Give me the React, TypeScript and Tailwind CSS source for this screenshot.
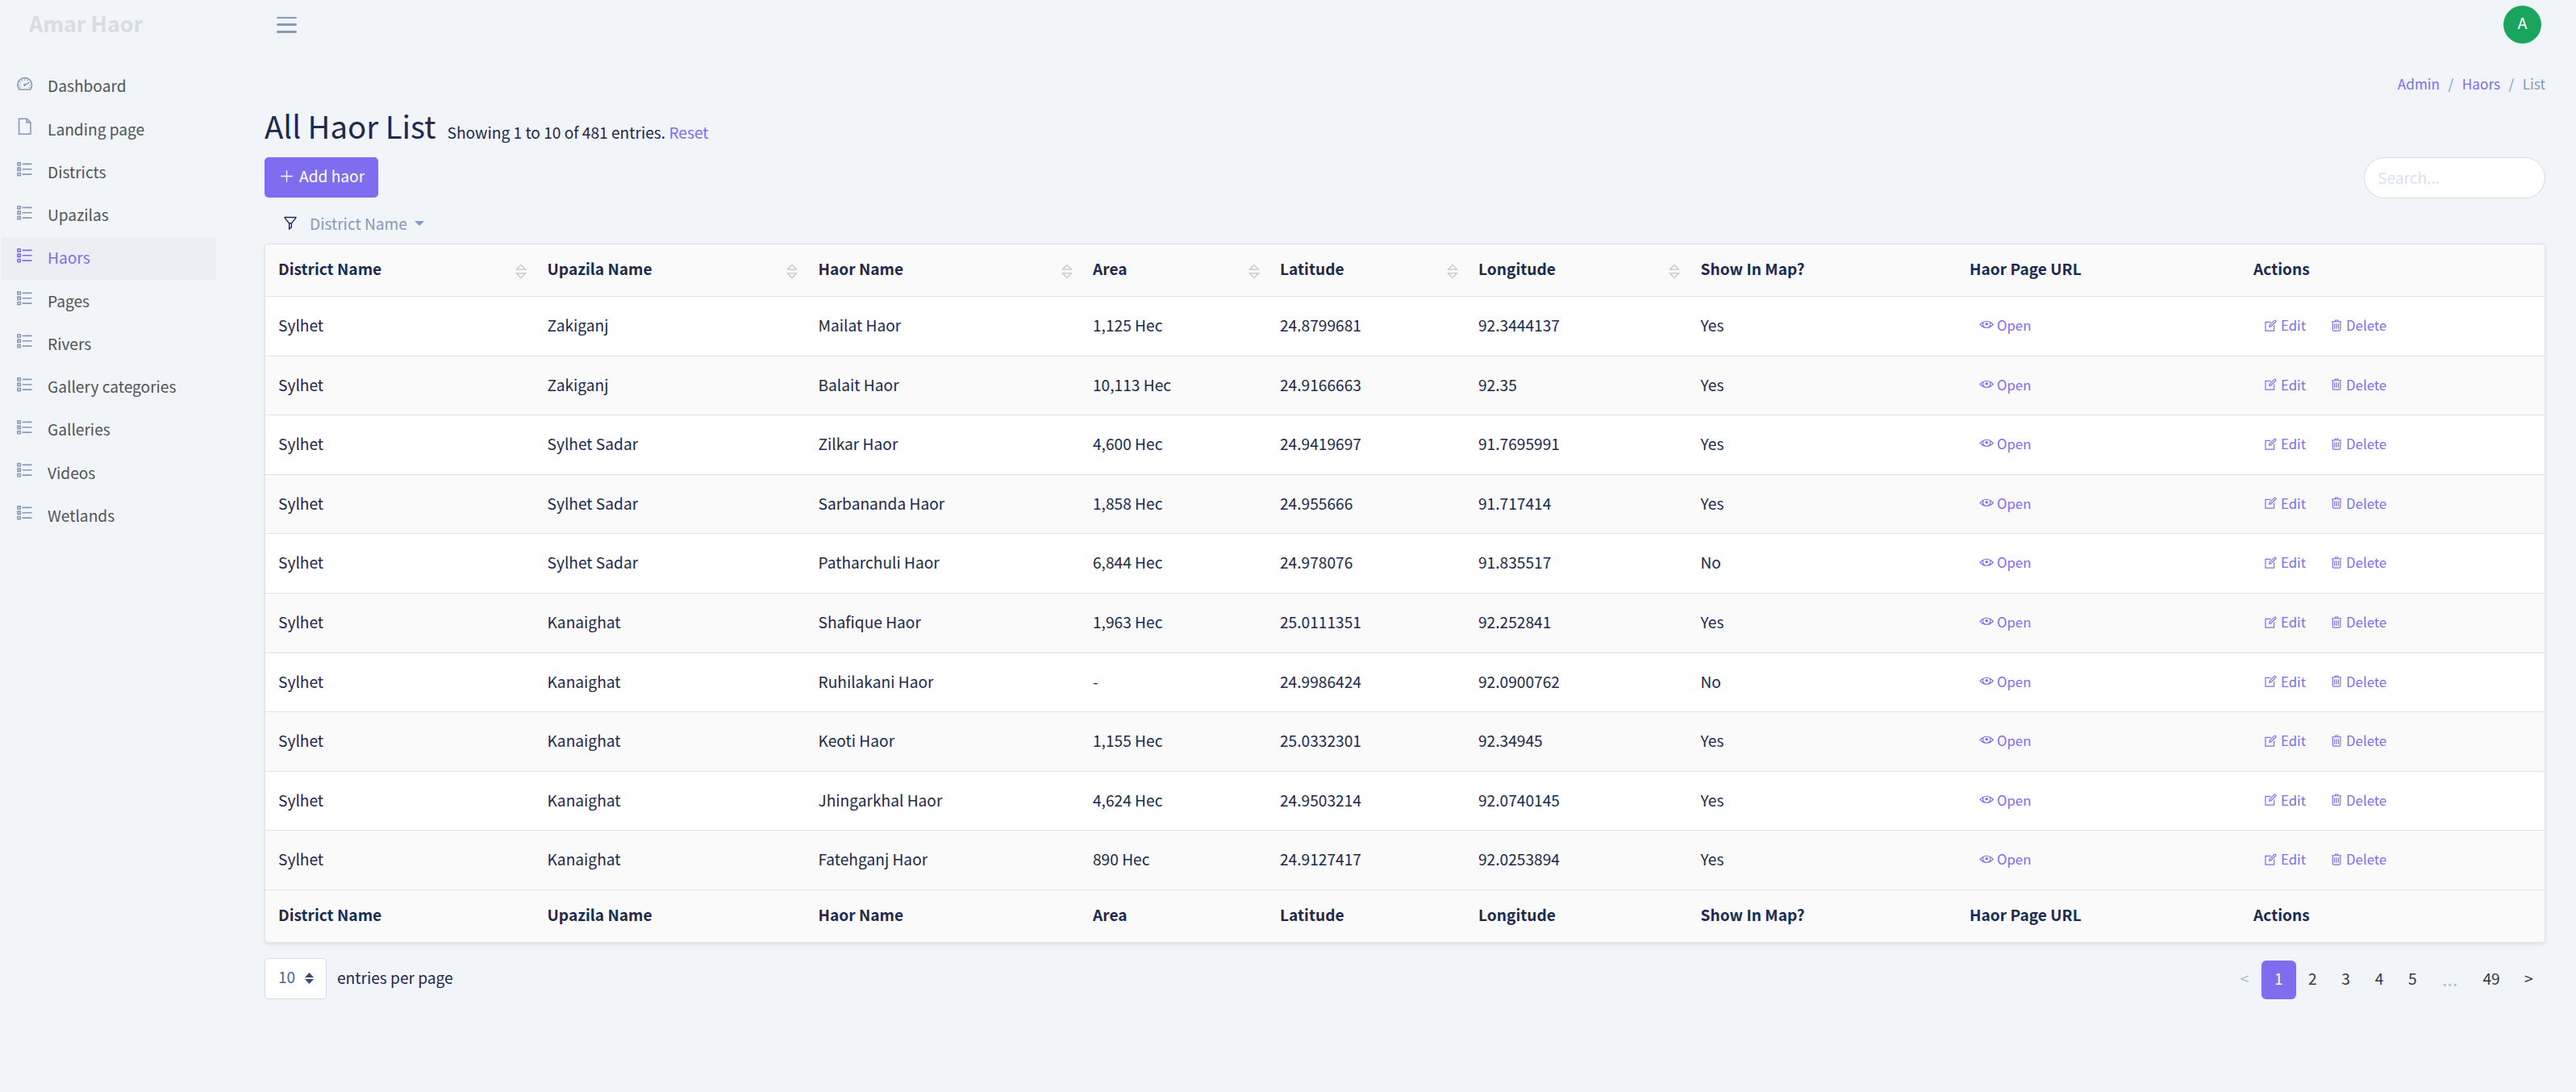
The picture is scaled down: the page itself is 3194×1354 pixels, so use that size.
import { useState } from 'react';
import {
  LiaEdit,
  LiaEye,
  LiaFile,
  LiaFilterSolid,
  LiaListSolid,
  LiaPlusSolid,
  LiaTachometerAltSolid,
  LiaTrashAlt,
} from 'react-icons/lia';
import { clsx } from 'clsx';

interface Haor {
  district: string;
  upazila: string;
  name: string;
  area: string;
  lat: string;
  lng: string;
  inMap: boolean;
}

const menu = [
  { label: 'Dashboard', icon: LiaTachometerAltSolid },
  { label: 'Landing page', icon: LiaFile },
  { label: 'Districts', icon: LiaListSolid },
  { label: 'Upazilas', icon: LiaListSolid },
  { label: 'Haors', icon: LiaListSolid },
  { label: 'Pages', icon: LiaListSolid },
  { label: 'Rivers', icon: LiaListSolid },
  { label: 'Gallery categories', icon: LiaListSolid },
  { label: 'Galleries', icon: LiaListSolid },
  { label: 'Videos', icon: LiaListSolid },
  { label: 'Wetlands', icon: LiaListSolid },
];

const columns = [
  { label: 'District Name', width: 'w-[333.5px]', sortable: true },
  { label: 'Upazila Name', width: 'w-[336px]', sortable: true },
  { label: 'Haor Name', width: 'w-[340.5px]', sortable: true },
  { label: 'Area', width: 'w-[232px]', sortable: true },
  { label: 'Latitude', width: 'w-[246px]', sortable: true },
  { label: 'Longitude', width: 'w-[275.5px]', sortable: true },
  { label: 'Show In Map?', width: 'w-[333.5px]', sortable: false },
  { label: 'Haor Page URL', width: 'w-[352px]', sortable: false },
  { label: 'Actions', width: '', sortable: false },
];

const haors: Haor[] = [
  { district: 'Sylhet', upazila: 'Zakiganj', name: 'Mailat Haor', area: '1,125 Hec', lat: '24.8799681', lng: '92.3444137', inMap: true },
  { district: 'Sylhet', upazila: 'Zakiganj', name: 'Balait Haor', area: '10,113 Hec', lat: '24.9166663', lng: '92.35', inMap: true },
  { district: 'Sylhet', upazila: 'Sylhet Sadar', name: 'Zilkar Haor', area: '4,600 Hec', lat: '24.9419697', lng: '91.7695991', inMap: true },
  { district: 'Sylhet', upazila: 'Sylhet Sadar', name: 'Sarbananda Haor', area: '1,858 Hec', lat: '24.955666', lng: '91.717414', inMap: true },
  { district: 'Sylhet', upazila: 'Sylhet Sadar', name: 'Patharchuli Haor', area: '6,844 Hec', lat: '24.978076', lng: '91.835517', inMap: false },
  { district: 'Sylhet', upazila: 'Kanaighat', name: 'Shafique Haor', area: '1,963 Hec', lat: '25.0111351', lng: '92.252841', inMap: true },
  { district: 'Sylhet', upazila: 'Kanaighat', name: 'Ruhilakani Haor', area: '-', lat: '24.9986424', lng: '92.0900762', inMap: false },
  { district: 'Sylhet', upazila: 'Kanaighat', name: 'Keoti Haor', area: '1,155 Hec', lat: '25.0332301', lng: '92.34945', inMap: true },
  { district: 'Sylhet', upazila: 'Kanaighat', name: 'Jhingarkhal Haor', area: '4,624 Hec', lat: '24.9503214', lng: '92.0740145', inMap: true },
  { district: 'Sylhet', upazila: 'Kanaighat', name: 'Fatehganj Haor', area: '890 Hec', lat: '24.9127417', lng: '92.0253894', inMap: true },
];

const pages = ['<', '1', '2', '3', '4', '5', '…', '49', '>'];

const SortIcon = () => (
  <svg className="h-[19px] w-[14px]" viewBox="0 0 14 19" fill="none" stroke="#c0c5d0" strokeWidth="1.3">
    <path d="M7 1.4 12.6 7.2H1.4Z" />
    <path d="M7 17.6 12.6 11.8H1.4Z" />
  </svg>
);

const Header = () => (
  <header className="flex h-[61px] items-center">
    <div className="w-[343px] pb-[4px] pl-9 text-[26.8px] leading-[40px] font-bold text-[#d9dde1]">Amar Haor</div>
    <button className="flex h-[20px] w-[25px] flex-col justify-between">
      <span className="h-[2.5px] w-full rounded-full bg-[#869ab8]" />
      <span className="h-[2.5px] w-full rounded-full bg-[#869ab8]" />
      <span className="h-[2.5px] w-full rounded-full bg-[#869ab8]" />
    </button>
    <div className="mr-[43px] ml-auto flex size-[47px] items-center justify-center rounded-full bg-[#1aa55c] pb-[5px] text-white">
      A
    </div>
  </header>
);

const Sidebar = () => (
  <nav className="w-[268px] shrink-0 pt-[20px] pl-px">
    {menu.map(({ label, icon: Icon }) => {
      const active = label === 'Haors';
      return (
        <a
          key={label}
          className={clsx(
            'flex h-[53.25px] items-center rounded pb-[2.5px] pl-[17px]',
            active ? 'bg-[#ebeef3] text-[#7e6dee]' : 'text-[#4f5459]',
          )}
        >
          <Icon className={clsx('mb-[5.5px] size-[25.5px]', !active && 'text-[#869ab8]')} />
          <span className="ml-[15.5px]">{label}</span>
        </a>
      );
    })}
  </nav>
);

const HaorTable = () => (
  <div className="overflow-hidden rounded border border-[#dfe3ea] bg-[#fafafa] shadow-[0_2px_4px_rgba(27,42,78,0.1)]">
    <table className="w-full table-fixed border-separate border-spacing-0 text-left">
      <thead>
        <tr className="h-[64px]">
          {columns.map(({ label, width, sortable }) => (
            <th key={label} className={clsx('p-0 pb-[4px] pl-4 align-middle font-bold', width)}>
              <div className="flex items-center justify-between pr-[9.5px]">
                {label}
                {sortable && <span className="mt-[6px]"><SortIcon /></span>}
              </div>
            </th>
          ))}
        </tr>
      </thead>
      <tbody>
        {haors.map((haor) => (
          <tr key={haor.name} className="h-[73.6px] bg-[#fafafa] odd:bg-white [&>td]:border-t [&>td]:border-[#dfe2e6] [&>td]:p-0 [&>td]:pb-[2.5px] [&>td]:pl-4">
            <td>{haor.district}</td>
            <td>{haor.upazila}</td>
            <td>{haor.name}</td>
            <td>{haor.area}</td>
            <td>{haor.lat}</td>
            <td>{haor.lng}</td>
            <td>{haor.inMap ? 'Yes' : 'No'}</td>
            <td>
              <a className="flex items-center pl-[12px] text-[16.8px] text-[#7e6dee]">
                <LiaEye className="mr-[3.5px] mb-px size-[18.5px]" />
                Open
              </a>
            </td>
            <td>
              <div className="flex items-center pl-[11.5px] text-[16.8px] text-[#7e6dee]">
                <a className="flex items-center">
                  <LiaEdit className="mr-[3.5px] size-[19px]" />
                  Edit
                </a>
                <a className="ml-[28px] flex items-center">
                  <LiaTrashAlt className="mr-[3px] size-[19px]" />
                  Delete
                </a>
              </div>
            </td>
          </tr>
        ))}
      </tbody>
      <tfoot>
        <tr className="h-[65px]">
          {columns.map(({ label }) => (
            <th key={label} className="border-t border-[#dfe2e6] p-0 pb-[4px] pl-4 font-bold">{label}</th>
          ))}
        </tr>
      </tfoot>
    </table>
  </div>
);

const Pagination = () => {
  const [current, setCurrent] = useState('1');

  return (
    <div className="flex h-[48px] text-[#36393d]">
      {pages.map((page) => (
        <button
          key={page}
          onClick={() => /\d/.test(page) && setCurrent(page)}
          className={clsx(
            'flex items-center justify-center pb-[4px]',
            page === '49' || page === '…' ? 'w-[51.4px]' : page === current ? 'w-[43px]' : 'w-[41.3px]',
            page === current && 'rounded-md bg-[#7e6dee] text-white',
            (page === '<' || page === '…') && 'text-[#aebcd2]',
            page === '…' && "font-['Open_Sans',sans-serif] text-[25px]",
          )}
        >
          {page}
        </button>
      ))}
    </div>
  );
};

const App = () => {
  return (
    <div className="min-h-[1354px] bg-[#f1f4f9] font-['Noto_Sans_CJK_SC',sans-serif] text-[19.15px] leading-[30px] text-[#1b2a4e]">
      <Header />
      <div className="flex">
        <Sidebar />
        <main className="mr-[38px] ml-[60px] flex-1">
          {/* Breadcrumb */}
          <div className="mt-[28px] flex justify-end gap-[10.5px] text-[17.2px] text-[#869ab8]">
            <a className="text-[#7e6dee]">Admin</a>
            <span>/</span>
            <a className="text-[#7e6dee]">Haors</a>
            <span>/</span>
            <span>List</span>
          </div>

          <div className="mt-[9px] flex h-[67px] items-baseline">
            <h1 className="text-[38.3px] leading-[56px]">All Haor List</h1>
            <p className="ml-[14px]">
              Showing 1 to 10 of 481 entries. <a className="text-[#7e6dee]">Reset</a>
            </p>
          </div>

          {/* Toolbar */}
          <div className="flex justify-between">
            <button className="flex h-[50px] w-[141px] items-center rounded-[5px] bg-[#7e6dee] pb-[4px] pl-[17px] text-white">
              <LiaPlusSolid className="mr-[5px] size-[21px]" />
              Add haor
            </button>
            <input
              className="h-[51px] w-[225px] rounded-full border border-[#d5dae5] bg-white px-4 pb-[2px] placeholder:text-[#d9e2ef]"
              placeholder="Search..."
            />
          </div>
          <div className="flex h-[56px] items-center pt-[6px] pl-[21px] text-[#869ab8]">
            <LiaFilterSolid className="size-[22px] text-[#1b2a4e]" />
            <span className="ml-[13px]">District Name</span>
            <span className="ml-[9px] border-x-[6px] border-t-[6px] border-x-transparent border-t-[#869ab8]" />
          </div>

          <HaorTable />

          <div className="mt-[19px] flex items-end justify-between">
            <label className="flex items-center">
              <span className="flex h-[51px] w-[77px] items-center rounded border border-[#d2dcea] bg-white pb-[4px] pl-4 text-[#506690]">
                10
                <svg className="mt-[4px] ml-[11.5px] h-[14px] w-[11px]" viewBox="0 0 11 14" fill="#384c74">
                  <path d="M5.5 0 11 6H0ZM5.5 14 11 8H0Z" />
                </svg>
              </span>
              <span className="ml-[13px] pb-[3px]">entries per page</span>
            </label>
            <Pagination />
          </div>
        </main>
      </div>
    </div>
  );
};

export default App;
